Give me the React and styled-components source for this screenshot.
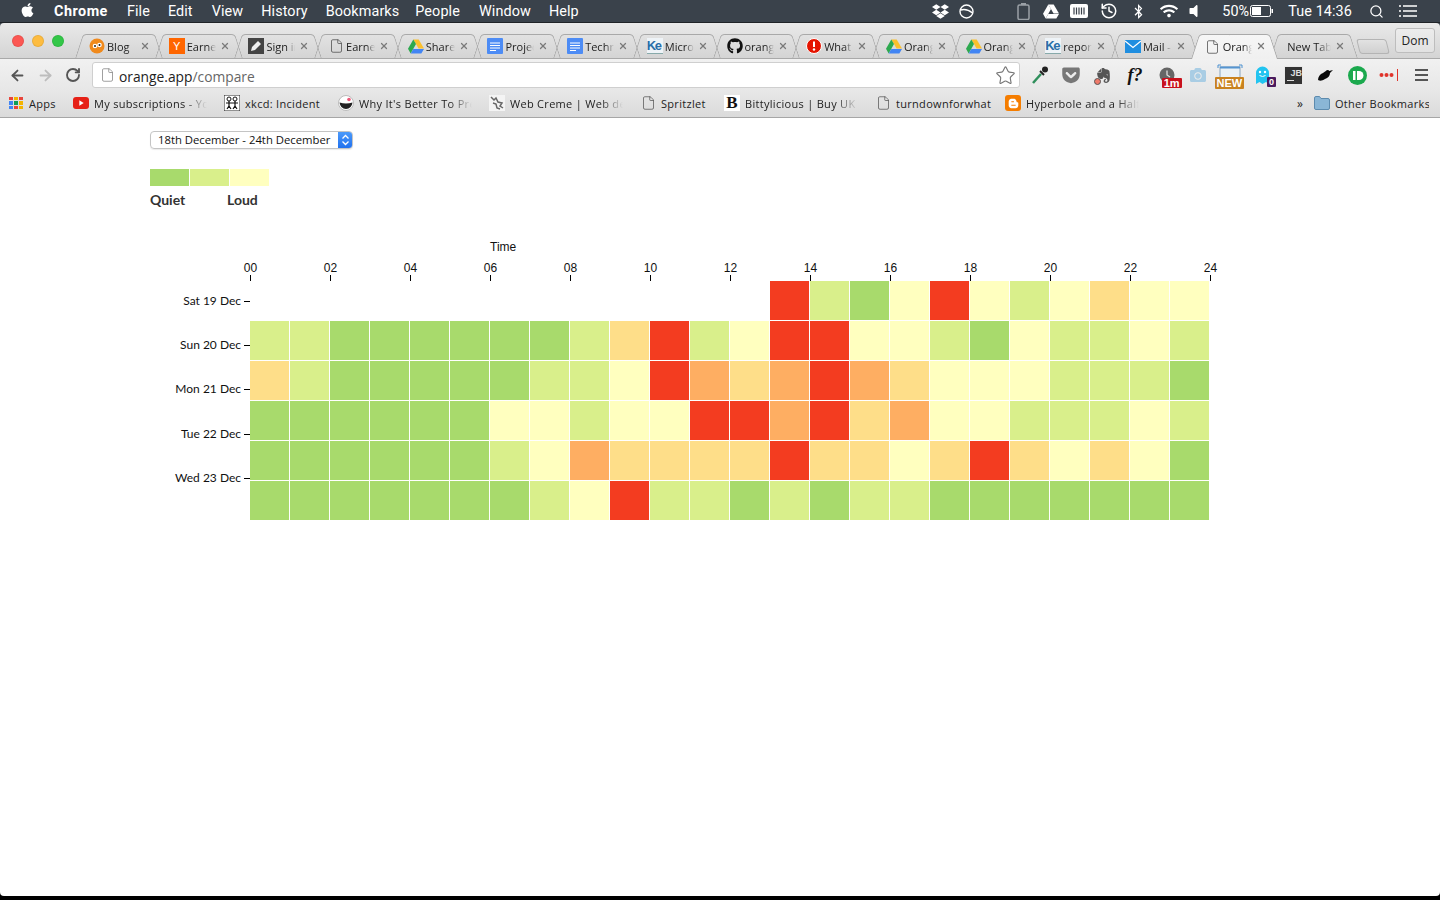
import React from 'react';
import styled, { createGlobalStyle } from 'styled-components';
import { FaApple, FaDropbox, FaBluetoothB, FaWifi, FaVolumeOff, FaGithub, FaBloggerB, FaGetPocket, FaCamera } from 'react-icons/fa';
import { SiEvernote } from 'react-icons/si';
import { History, Search, Star, ArrowLeft, ArrowRight, RotateCw, File, X } from 'lucide-react';

const Global = createGlobalStyle`
  html, body { margin: 0; padding: 0; background: #000; }
  * { box-sizing: border-box; }
`;

const Screen = styled.div`
  width: 1440px; height: 900px; display: flex; flex-direction: column;
  background: #000; overflow: hidden; font-family: "Liberation Sans", sans-serif;
`;

/* ---------- mac menu bar ---------- */
const MenuBar = styled.div`
  height: 23px; flex: none; background: #3a424b; color: #fff; display: flex; align-items: center;
  font-family: Roboto, sans-serif; font-size: 14.4px; padding: 0 23px 0 20px;
  border-bottom: 1px solid #1f2327;
`;
const AppleMark = styled(FaApple)` width: 15px; height: 16px; margin-right: 19px; margin-top: -2px; `;
const MenuItem = styled.span`
  margin-right: ${p => p.$mr}px; font-weight: ${p => (p.$bold ? 700 : 400)}; letter-spacing: ${p => (p.$bold ? 0.5 : 0.1)}px; white-space: nowrap;
`;
const StatusArea = styled.div` margin-left: auto; display: flex; align-items: center; `;
const StatusSlot = styled.span`
  display: flex; align-items: center; justify-content: center; margin-left: ${p => p.$ml}px; width: ${p => p.$w}px; color: #fff;
`;
const StatusText = styled.span`
  margin-left: ${p => p.$ml}px; white-space: nowrap; letter-spacing: 0.1px;
`;

/* ---------- chrome frame ---------- */
const Frame = styled.div`
  flex: none; background: #3a424b;
`;
const TabStrip = styled.div`
  height: 35px; display: flex; align-items: flex-end; padding: 0 0 0 79px; position: relative;
  background: linear-gradient(#e9e9e9, #d4d4d4); border-radius: 4px 4px 0 0;
`;
const Traffic = styled.div`
  position: absolute; left: 12px; top: 12px; display: flex; gap: 8px;
`;
const Light = styled.span`
  width: 12px; height: 12px; border-radius: 50%; background: ${p => p.$c}; box-shadow: inset 0 0 0 1px rgba(0,0,0,.08);
`;
const Tab = styled.div`
  width: 79.7px; height: ${p => (p.$active ? 25 : 24)}px; margin-bottom: ${p => (p.$active ? -1 : 0)}px;
  position: relative; flex: none; display: flex; align-items: center; font-size: 11.5px; color: #222;
  z-index: ${p => (p.$active ? 2 : 1)};
  ${p => p.$active && 'background: linear-gradient(#f6f6f6, #f0f0f0) center / 60% 100% no-repeat;'}
  &::before, &::after {
    content: ""; position: absolute; top: 0; bottom: 0; width: 50%; z-index: -1;
    border-top: 1px solid #a9a9a9;
    background: ${p => (p.$active ? 'linear-gradient(#f6f6f6, #f0f0f0)' : 'transparent')};
  }
  &::before { left: 0; border-left: 1px solid #a9a9a9; border-top-left-radius: 4px; transform: skewX(-18deg); }
  &::after { right: 0; border-right: 1px solid #a9a9a9; border-top-right-radius: 4px; transform: skewX(18deg); }
`;
const TabIcon = styled.span`
  width: 16px; height: 16px; margin-left: 10px; flex: none; display: flex; align-items: center; justify-content: center;
`;
const TabTitle = styled.span`
  margin-left: ${p => (p.$wide ? 13 : 2)}px; width: ${p => (p.$wide ? 44 : 29)}px; flex: none; overflow: hidden; white-space: nowrap;
  font-family: "Open Sans", sans-serif; font-size: 11px;
  -webkit-mask-image: linear-gradient(90deg, #000 70%, transparent);
  mask-image: linear-gradient(90deg, #000 70%, transparent);
`;
const TabClose = styled(X)`
  position: absolute; left: 61px; top: 7px; width: 10px; height: 10px; color: #7a7a7a; stroke-width: 3;
`;
const NewTabButton = styled.div`
  width: 30px; height: 15px; margin: 0 0 4px 4px; background: linear-gradient(#e2e2e2, #d0d0d0); border: 1px solid #b4b4b4;
  border-radius: 3px; transform: skewX(14deg); flex: none;
`;
const Profile = styled.div`
  position: absolute; right: 5px; top: 5px; width: 40px; height: 25px; border: 1px solid #bdbdbd; border-radius: 3px;
  display: flex; align-items: center; justify-content: center; background: linear-gradient(#ececec, #e2e2e2);
  font-family: "Open Sans", sans-serif; font-size: 12px; color: #222;
`;
const Toolbar = styled.div`
  height: 33px; display: flex; align-items: center; padding: 0 3px; background: linear-gradient(#f1f1f1, #e7e7e7);
  border-top: 1px solid #a9a9a9;
`;
const NavButton = styled.span`
  width: 28px; display: flex; justify-content: center; color: ${p => (p.$off ? '#bdbdbd' : '#555')};
`;
const AddressBar = styled.div`
  flex: 1; height: 26px; margin-left: 5px; background: #fff; border: 1px solid #cfcfcf; border-radius: 3px;
  display: flex; align-items: center; padding: 0 3px 0 7px; font-family: "Open Sans", sans-serif; font-size: 13.8px; color: #222;
`;
const PageGlyph = styled(File)` width: 15px; height: 16px; color: #8a8a8a; stroke-width: 1.3; margin-right: 4px; flex: none; `;
const UrlText = styled.span` margin-top: 2px; `;
const Muted = styled.span` color: #666; `;
const StarIcon = styled(Star)` margin-left: auto; width: 21px; height: 21px; color: #777; stroke-width: 1.3; `;
const Extensions = styled.div` margin-left: 4px; display: flex; width: 413.4px; flex: none; `;
const Ext = styled.span`
  width: 31.8px; height: 24px; display: flex; align-items: center; justify-content: center; position: relative; flex: none;
`;
const Badge = styled.span`
  position: absolute; right: ${p => p.$r ?? 3}px; bottom: ${p => p.$b ?? -1}px; padding: 0 ${p => p.$px ?? 2}px; background: ${p => p.$c};
  color: #fff; font: 700 ${p => p.$s ?? 10}px/${p => p.$lh ?? 10}px "Liberation Sans", sans-serif; border-radius: 1px;
`;
const Formula = styled.span`
  font: italic 700 18px "Liberation Serif", serif; color: #111;
`;
const JBBox = styled.span`
  width: 19px; height: 19px; background: #333; color: #ddd; border: 1px solid #e8e8e8;
  font: 700 9px/10px "Liberation Sans", sans-serif; padding: 1px 0 0 5px; display: block; position: relative;
  &::after { content: ""; position: absolute; left: 2px; bottom: 3px; width: 7px; height: 1px; background: #ddd; }
`;
const Burger = styled.span`
  display: flex; flex-direction: column; gap: 2.5px; width: 13px;
  & > i { display: block; height: 2.5px; background: #555; }
`;
const Bookmarks = styled.div`
  height: 27px; display: flex; align-items: center; padding: 0 11px 2px 8px; background: linear-gradient(#e7e7e7, #dadada);
  border-bottom: 1px solid #a6a6a6; font-family: "Open Sans", sans-serif; font-size: 11px; color: #222;
`;
const Bookmark = styled.div`
  display: flex; align-items: center; width: ${p => p.$w}px; margin-right: ${p => p.$mr ?? 17}px; flex: none;
`;
const MarkIcon = styled.span`
  width: 16px; height: 16px; display: flex; align-items: center; justify-content: center; margin-right: 5px; flex: none;
`;
const MarkLabel = styled.span`
  flex: 1; min-width: 0; overflow: hidden; white-space: nowrap; letter-spacing: 0.3px;
  ${p => p.$fade && `
    -webkit-mask-image: linear-gradient(90deg, #000 80%, transparent);
    mask-image: linear-gradient(90deg, #000 80%, transparent);
  `}
`;
const More = styled.span` margin-left: auto; margin-right: 11px; font-size: 12px; `;
const AppsGrid = styled.span`
  display: grid; grid-template-columns: repeat(3, 4px); gap: 1px; width: 14px;
`;
const AppDot = styled.i` display: block; width: 4px; height: 3.6px; background: ${p => p.$c}; `;

/* ---------- page ---------- */
const Page = styled.main`
  flex: 1; margin-bottom: 4px; background: #fff; border-radius: 0 0 4px 4px; padding: 13px 0 0 150px; color: #111;
`;
const RangeSelect = styled.div`
  width: 203px; height: 18px; display: flex; align-items: center; border: 1px solid #c4c4c4; border-radius: 4px;
  font-family: "Open Sans", sans-serif; font-size: 11.3px; padding: 0 0 2px 7px; position: relative; overflow: hidden;
  color: #111; box-shadow: 0 1px 1px rgba(0,0,0,.08);
`;
const Stepper = styled.span`
  position: absolute; right: -1px; top: -1px; bottom: -1px; width: 15px; background: linear-gradient(#4f9dfb, #1e6fee);
  display: flex; align-items: center; justify-content: center;
`;
const LegendBar = styled.div` display: flex; gap: 1px; margin-top: 20px; `;
const LegendSwatch = styled.span` width: 39px; height: 17px; background: ${p => p.$c}; `;
const LegendLabels = styled.div`
  display: flex; margin-top: 6px; font: 700 14px/16px Lato, sans-serif; color: #333;
`;
const LegendLabel = styled.span` width: 77px; `;
const Chart = styled.div` display: grid; grid-template-columns: 100px 961px; margin-top: 32px; `;
const TimeTitle = styled.div`
  grid-column: 2; padding-left: 240px; font-size: 12px; line-height: 14px; color: #111;
`;
const XAxis = styled.div`
  grid-column: 2; display: flex; justify-content: space-between; margin-top: 7px;
`;
const XTick = styled.div`
  width: 1px; display: flex; flex-direction: column; align-items: center; font-size: 12px; line-height: 14px;
  &::after { content: ""; width: 1px; height: 6px; background: #000; flex: none; }
`;
const YAxis = styled.div` grid-column: 1; display: flex; flex-direction: column; margin-top: -2.2px; `;
const YTick = styled.div`
  height: 44.4px; display: flex; align-items: center; justify-content: flex-end; gap: 3px; padding-bottom: 2px;
  font: 12px Lato, sans-serif; color: #111;
  &::after { content: ""; width: 6px; height: 1px; margin-top: 2px; background: #000; flex: none; }
`;
const Heat = styled.div`
  grid-column: 2; display: grid; grid-template-columns: repeat(24, 39px); grid-auto-rows: 39px; gap: 1px;
`;
const Cell = styled.span` background: ${p => p.$c}; `;

/* ---------- drawings ---------- */
const Drive = ({ mono }) => (
  <svg width="16" height="15" viewBox="0 0 16 14">
    <path d="M5.3 0h5.4l5.3 9h-5.4z" fill={mono ? '#fff' : '#fbc02d'} />
    <path d="M5.3 0 8 4.6 2.7 14 0 9.3z" fill={mono ? '#fff' : '#2da94f'} />
    <path d="M5.3 9.6H16L13.3 14H2.7z" fill={mono ? '#fff' : '#4285f4'} />
  </svg>
);
const Doc = () => (
  <svg width="16" height="16" viewBox="0 0 16 16">
    <rect width="16" height="16" rx="1" fill="#4d8cf5" />
    <path d="M3 5h10M3 7.5h10M3 10h10M3 12.5h6" stroke="#fff" strokeWidth="1" />
  </svg>
);
const KeText = styled.span`
  font: 700 13px/15px "Liberation Sans", sans-serif; color: #2a6ea8; letter-spacing: -1.5px; background: #eef3f7;
  width: 16px; height: 16px; display: block; overflow: hidden; border-bottom: 1px solid #8aa;
`;
const YBox = styled.span`
  width: 16px; height: 16px; background: #f60; color: #fff; font: 11px/16px "Liberation Sans", sans-serif; text-align: center; display: block;
`;
const Pencil = () => (
  <svg width="16" height="16" viewBox="0 0 16 16">
    <rect width="16" height="16" fill="#444" />
    <path d="m3 13 1-4 6-6 3 3-6 6z" fill="#eee" />
  </svg>
);
const Bird = () => (
  <svg width="16" height="16" viewBox="0 0 16 16">
    <circle cx="8" cy="8" r="7.5" fill="#f08a1d" />
    <circle cx="6" cy="8" r="2.3" fill="#fff" /><circle cx="10.5" cy="7" r="2.3" fill="#fff" />
    <circle cx="6" cy="8" r="1" fill="#222" /><circle cx="10.5" cy="7" r="1" fill="#222" />
  </svg>
);
const Alert = () => (
  <svg width="16" height="16" viewBox="0 0 16 16">
    <circle cx="8" cy="8" r="7.5" fill="#e51400" stroke="#fff" />
    <path d="M8 3.5v5.5" stroke="#fff" strokeWidth="2" /><circle cx="8" cy="11.5" r="1.2" fill="#fff" />
  </svg>
);
const Mail = () => (
  <svg width="16" height="13" viewBox="0 0 16 13">
    <rect width="16" height="13" fill="#1f8ee0" />
    <path d="m0 1 8 6.5L16 1" fill="none" stroke="#fff" strokeWidth="1.3" />
  </svg>
);
const TabDoc = styled(File)` width: 15px; height: 16px; color: #555; stroke-width: 1.3; `;
const Github = styled(FaGithub)` width: 16px; height: 16px; color: #111; `;

const YouTube = () => (
  <svg width="16" height="12" viewBox="0 0 16 12">
    <rect width="16" height="12" rx="3" fill="#e62117" />
    <path d="m6.3 3.2 4.4 2.8-4.4 2.8z" fill="#fff" />
  </svg>
);
const Xkcd = () => (
  <svg width="16" height="16" viewBox="0 0 16 16">
    <rect width="16" height="16" fill="#fff" stroke="#222" />
    <circle cx="5" cy="4" r="2" fill="none" stroke="#111" /><circle cx="11" cy="4" r="2" fill="none" stroke="#111" />
    <path d="M5 6v5l-2 3M5 11l2 3M2 8h6M11 6v5l-2 3M11 11l2 3M8 8h6" stroke="#111" fill="none" strokeWidth="1.2" />
  </svg>
);
const Smile = () => (
  <svg width="16" height="16" viewBox="0 0 16 16">
    <circle cx="8" cy="8" r="7.5" fill="#fff" stroke="#bbb" />
    <path d="M1.5 7.500q6.500 2 13 0-1 6.500-6.500 6.500t-6.500-6.500z" fill="#222" />
    <circle cx="11" cy="4.500" r="1.800" fill="#ec5a7a" />
  </svg>
);
const Creme = () => (
  <svg width="16" height="16" viewBox="0 0 16 16">
    <rect width="16" height="16" fill="#f4f4f4" />
    <path d="M2 2l3 3 2-2 2 4 4 1-2 3 3 2M4 8l3 1 1 4 3 1" stroke="#666" strokeWidth="1.500" fill="none" />
  </svg>
);
const BittyBox = styled.span`
  width: 16px; height: 16px; background: #fff; color: #111; font: 700 17px/16px "Liberation Serif", serif; text-align: center; display: block;
`;
const MarkDoc = styled(File)` width: 15px; height: 16px; color: #555; stroke-width: 1.200; `;
const BloggerBox = styled.span`
  width: 16px; height: 16px; background: #f57d00; border-radius: 3px; display: flex; align-items: center; justify-content: center;
`;
const Folder = () => (
  <svg width="16" height="14" viewBox="0 0 16 14">
    <path d="M.5 2q0-1.500 1.500-1.500h3.500l1.500 2h7q1.500 0 1.500 1.500v8q0 1.500-1.500 1.500H2q-1.500 0-1.500-1.500z" fill="#8ab6d6" stroke="#5d8bae" />
  </svg>
);
const Stepped = () => (
  <svg width="9" height="12" viewBox="0 0 9 12">
    <path d="m1.500 4.500 3-3 3 3M1.500 7.500l3 3 3-3" fill="none" stroke="#fff" strokeWidth="1.300" />
  </svg>
);
const SleepCircle = () => (
  <svg width="15" height="15" viewBox="0 0 15 15">
    <circle cx="7.500" cy="7.500" r="6.500" fill="none" stroke="#fff" strokeWidth="1.400" />
    <path d="M1.500 6q6-2 12 3" fill="none" stroke="#fff" strokeWidth="1.400" />
  </svg>
);
const PhoneBattery = () => (
  <svg width="13" height="17" viewBox="0 0 13 17">
    <rect x="1" y="2" width="11" height="14.500" rx="1.500" fill="none" stroke="#9aa0a6" strokeWidth="1.500" />
    <rect x="4" y="0" width="5" height="2" fill="#9aa0a6" />
  </svg>
);
const GridBattery = () => (
  <svg width="18" height="14" viewBox="0 0 18 14">
    <rect width="18" height="14" rx="2" fill="#fff" />
    <path d="M4 3.500v7M6.500 3.500v7M9 3.500v7M11.500 3.500v7M14 3.500v7" stroke="#3a424b" strokeWidth="1.200" />
  </svg>
);
const MacBattery = () => (
  <svg width="23" height="12" viewBox="0 0 23 12">
    <rect x=".5" y=".5" width="20" height="11" rx="2" fill="none" stroke="#fff" />
    <rect x="2" y="2" width="9" height="8" fill="#fff" />
    <rect x="21.500" y="4" width="1.500" height="4" fill="#fff" />
  </svg>
);
const ListIcon = () => (
  <svg width="18" height="12" viewBox="0 0 18 12">
    <path d="M0 1h2M4 1h14M0 6h2M4 6h14M0 11h2M4 11h14" stroke="#fff" strokeWidth="1.600" />
  </svg>
);
const TabsCam = styled(FaCamera)` width: 18px; height: 16px; color: #a9cde4; `;
const Dropper = () => (
  <svg width="18" height="20" viewBox="0 0 18 20">
    <path d="m2 18 8-9" stroke="#2f8f5b" strokeWidth="2.500" />
    <path d="m9 6 4 4" stroke="#222" strokeWidth="2" />
    <circle cx="14" cy="4.500" r="3" fill="#222" />
  </svg>
);
const Ghost = () => (
  <svg width="17" height="20" viewBox="0 0 17 20">
    <path d="M2 8a6.500 6.500 0 0 1 13 0v11l-3-2-3.500 2-3-2L2 19z" fill="#22c4f0" />
    <circle cx="6" cy="7" r="1.200" fill="#fff" /><circle cx="11" cy="7" r="1.200" fill="#fff" />
    <path d="M5.500 10.500q3 2 6 0" stroke="#fff" fill="none" />
  </svg>
);
const NewTag = () => (
  <svg width="30" height="22" viewBox="0 0 30 22">
    <rect x="5" y="3" width="20" height="14" fill="#eaf1f6" stroke="#8aa6bd" />
    <path d="M5 3.500h20" stroke="#5594d0" strokeWidth="2" />
    <path d="M3 1v3M3 1h3M27 1v3M27 1h-3" stroke="#4a90d0" fill="none" />
  </svg>
);
const BlackBird = () => (
  <svg width="18" height="14" viewBox="0 0 18 14">
    <path d="M1 12c0-3 2-6 5-7 2-1 3-3 5-3 1 0 1 1 1 1l4-1-3 3c0 3-2 5-5 6-3 2-5 2-7 1z" fill="#0a0a0a" />
  </svg>
);
const Pushbullet = () => (
  <svg width="19" height="19" viewBox="0 0 19 19">
    <circle cx="9.500" cy="9.500" r="9.500" fill="#1ba94e" />
    <rect x="5" y="5" width="2.500" height="9" fill="#fff" />
    <path d="M9 5h2a4.500 4.500 0 0 1 0 9H9z" fill="#fff" />
  </svg>
);
const Dots = () => (
  <svg width="20" height="12" viewBox="0 0 20 12">
    <circle cx="2.500" cy="6" r="2" fill="#e0332a" /><circle cx="7.500" cy="6" r="2" fill="#e0332a" /><circle cx="12.500" cy="6" r="2" fill="#e0332a" />
    <path d="M18.500 0v12" stroke="#e0332a" />
  </svg>
);
const ClockIcon = () => (
  <svg width="16" height="16" viewBox="0 0 16 16">
    <circle cx="8" cy="8" r="7.500" fill="#666" />
    <path d="M8 3.500V8l3 2" stroke="#ddd" fill="none" strokeWidth="1.300" />
  </svg>
);
const EverDot = styled.span`
  position: absolute; left: 7px; bottom: 2px; width: 7px; height: 7px; border-radius: 50%; background: #f07a6a; border: 1px solid #555;
`;

const G = '#a8da6c', L = '#d9ef8b', Y = '#ffffbf', O = '#fede89', A = '#feae62', R = '#f33c20', E = 'transparent';
const COLORS = { g: G, l: L, y: Y, o: O, a: A, r: R, _: E };
const ROWS = [
  '_____________rlgyrylyoyy',
  'llggggggglorlyrryylgyllyl'.replace('ggggggg', 'gggggg'),
  'olgggggllyraoaraoyyylllg',
  'ggggggyylyyrrarOayylllyl'.toLowerCase(),
  'gggggglyaoooorooyoroyoyg',
  'ggggggglyrllglgllggggggg',
];
const tabs = [
  [<Bird />, 'Blog'], [<YBox>Y</YBox>, 'Earnest'], [<Pencil />, 'Sign in'], [<TabDoc />, 'Earnest'], [<Drive />, 'Shared'],
  [<Doc />, 'Project'], [<Doc />, 'Technical'], [<KeText>Ke</KeText>, 'Microsoft'], [<Github />, 'orange'], [<Alert />, 'What is'],
  [<Drive />, 'Orange'], [<Drive />, 'Orange'], [<KeText>Ke</KeText>, 'report'], [<Mail />, 'Mail - x'],
];
const menu = [['File', 18], ['Edit', 19], ['View', 18], ['History', 18], ['Bookmarks', 16], ['People', 19], ['Window', 18], ['Help', 0]];
const ticks = ['00', '02', '04', '06', '08', '10', '12', '14', '16', '18', '20', '22', '24'];
const days = ['Sat 19 Dec', 'Sun 20 Dec', 'Mon 21 Dec', 'Tue 22 Dec', 'Wed 23 Dec'];
const appColors = ['#e8453c', '#f4b400', '#e8453c', '#4285f4', '#0f9d58', '#f4b400', '#4285f4', '#e8453c', '#f4b400'];
const marks = [
  [<YouTube />, 'My subscriptions - YouTube', 134, true, 17],
  [<Xkcd />, 'xkcd: Incident', 97, false, 17],
  [<Smile />, "Why It's Better To Pretend", 134, true, 17],
  [<Creme />, 'Web Creme | Web design', 134, true, 17],
  [<MarkDoc />, 'Spritzlet', 67, false, 17],
  [<BittyBox>B</BittyBox>, 'Bittylicious | Buy UK', 134, true, 17],
  [<MarkDoc />, 'turndownforwhat', 118, false, 12],
  [<BloggerBox><FaBloggerB size={11} color="#fff" /></BloggerBox>, 'Hyperbole and a Half', 134, true, 17],
];

export default function App() {
  return (
    <Screen>
      <Global />
      <MenuBar>
        <AppleMark />
        <MenuItem $bold $mr={19}>Chrome</MenuItem>
        {menu.map(([m, mr]) => <MenuItem key={m} $mr={mr}>{m}</MenuItem>)}
        <StatusArea>
          <StatusSlot $ml={0} $w={17}><FaDropbox size={17} /></StatusSlot>
          <StatusSlot $ml={10} $w={15}><SleepCircle /></StatusSlot>
          <StatusSlot $ml={43} $w={13}><PhoneBattery /></StatusSlot>
          <StatusSlot $ml={13} $w={16}><Drive mono /></StatusSlot>
          <StatusSlot $ml={11} $w={18}><GridBattery /></StatusSlot>
          <StatusSlot $ml={11} $w={19}><History size={18} /></StatusSlot>
          <StatusSlot $ml={15} $w={11}><FaBluetoothB size={15} /></StatusSlot>
          <StatusSlot $ml={14} $w={21}><FaWifi size={18} /></StatusSlot>
          <StatusSlot $ml={10} $w={9}><FaVolumeOff size={16} /></StatusSlot>
          <StatusText $ml={24}>50%</StatusText>
          <StatusSlot $ml={1} $w={23}><MacBattery /></StatusSlot>
          <StatusText $ml={15}>Tue 14:36</StatusText>
          <StatusSlot $ml={17} $w={15}><Search size={15} /></StatusSlot>
          <StatusSlot $ml={15} $w={18}><ListIcon /></StatusSlot>
        </StatusArea>
      </MenuBar>
      <Frame>
        <TabStrip>
          <Traffic>
            <Light $c="#fc5753" /><Light $c="#fdbc40" /><Light $c="#33c748" />
          </Traffic>
          {tabs.map(([icon, title], i) => (
            <Tab key={i}>
              <TabIcon>{icon}</TabIcon>
              <TabTitle>{title}</TabTitle>
              <TabClose />
            </Tab>
          ))}
          <Tab $active>
            <TabIcon><TabDoc /></TabIcon>
            <TabTitle>Orange</TabTitle>
            <TabClose />
          </Tab>
          <Tab>
            <TabTitle $wide>New Tab</TabTitle>
            <TabClose />
          </Tab>
          <NewTabButton />
          <Profile>Dom</Profile>
        </TabStrip>
        <Toolbar>
          <NavButton><ArrowLeft size={17} strokeWidth={2.600} /></NavButton>
          <NavButton $off><ArrowRight size={17} strokeWidth={2.600} /></NavButton>
          <NavButton><RotateCw size={16} strokeWidth={2.800} /></NavButton>
          <AddressBar>
            <PageGlyph />
            <UrlText>orange.app<Muted>/compare</Muted></UrlText>
            <StarIcon />
          </AddressBar>
          <Extensions>
            <Ext><Dropper /></Ext>
            <Ext><FaGetPocket size={20} color="#777" /></Ext>
            <Ext><SiEvernote size={15} color="#555" /><EverDot /></Ext>
            <Ext><Formula>f?</Formula></Ext>
            <Ext><ClockIcon /><Badge $c="#c8101c" $s={11} $r={1}>1m</Badge></Ext>
            <Ext><TabsCam /></Ext>
            <Ext><NewTag /><Badge $c="#c9821f" $s={11} $lh={12} $px={2} $r={2} $b={-2}>NEW</Badge></Ext>
            <Ext><Ghost /><Badge $c="#4a1a5e" $s={9} $r={2} $b={0}>0</Badge></Ext>
            <Ext><JBBox>JB</JBBox></Ext>
            <Ext><BlackBird /></Ext>
            <Ext><Pushbullet /></Ext>
            <Ext><Dots /></Ext>
            <Ext><Burger><i /><i /><i /></Burger></Ext>
          </Extensions>
        </Toolbar>
        <Bookmarks>
          <Bookmark $w={49} $mr={16}>
            <MarkIcon>
              <AppsGrid>{appColors.map((c, i) => <AppDot key={i} $c={c} />)}</AppsGrid>
            </MarkIcon>
            <MarkLabel>Apps</MarkLabel>
          </Bookmark>
          {marks.map(([icon, label, w, fade, mr]) => (
            <Bookmark key={label} $w={w} $mr={mr}>
              <MarkIcon>{icon}</MarkIcon>
              <MarkLabel $fade={fade}>{label}</MarkLabel>
            </Bookmark>
          ))}
          <More>»</More>
          <Bookmark $w={115} $mr={0}>
            <MarkIcon><Folder /></MarkIcon>
            <MarkLabel>Other Bookmarks</MarkLabel>
          </Bookmark>
        </Bookmarks>
      </Frame>
      <Page>
        <RangeSelect>
          18th December - 24th December
          <Stepper><Stepped /></Stepper>
        </RangeSelect>
        <LegendBar>
          <LegendSwatch $c={G} /><LegendSwatch $c={L} /><LegendSwatch $c={Y} />
        </LegendBar>
        <LegendLabels>
          <LegendLabel>Quiet</LegendLabel>
          <LegendLabel>Loud</LegendLabel>
        </LegendLabels>
        <Chart>
          <TimeTitle>Time</TimeTitle>
          <XAxis>
            {ticks.map(t => <XTick key={t}>{t}</XTick>)}
          </XAxis>
          <YAxis>
            {days.map(d => <YTick key={d}>{d}</YTick>)}
          </YAxis>
          <Heat>
            {ROWS.flatMap((r, i) => r.split('').map((c, j) => <Cell key={`${i}-${j}`} $c={COLORS[c]} />))}
          </Heat>
        </Chart>
      </Page>
    </Screen>
  );
}
